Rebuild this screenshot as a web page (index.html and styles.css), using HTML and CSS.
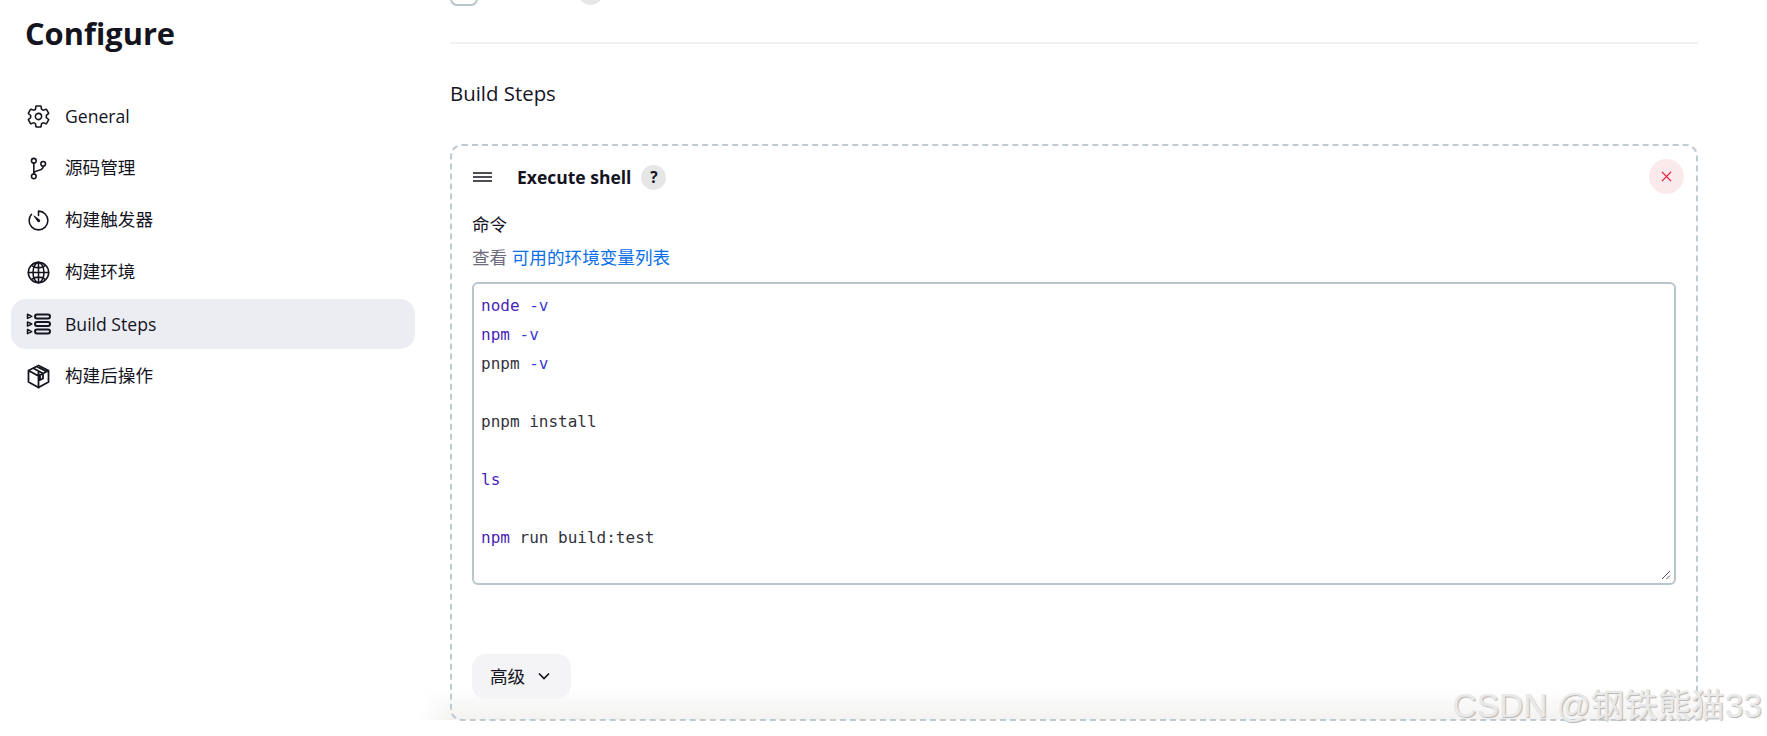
FILE: index.html
```html
<!DOCTYPE html>
<html lang="zh">
<head>
<meta charset="utf-8">
<title>Configure</title>
<link rel="stylesheet" href="styles.css">
</head>
<body>
<div class="fade"></div>
<div class="app">
  <aside class="sidebar">
    <h1 class="title">Configure</h1>
    <nav class="nav">
      <a class="nav-item"><svg class="nav-icon" viewBox="0 0 512 512"><path class="st" d="M262.29 192.31a64 64 0 1057.4 57.4 64.13 64.13 0 00-57.4-57.4zM416.39 256a154.34 154.34 0 01-1.53 20.79l45.21 35.46a10.81 10.81 0 012.45 13.75l-42.77 74a10.81 10.81 0 01-13.14 4.59l-44.9-18.08a16.11 16.11 0 00-15.17 1.75A164.48 164.48 0 01325 400.8a15.94 15.94 0 00-8.82 12.14l-6.73 47.89a11.08 11.08 0 01-10.68 9.17h-85.54a11.11 11.11 0 01-10.69-8.87l-6.72-47.82a16.07 16.07 0 00-9-12.22 155.3 155.3 0 01-21.46-12.57 16 16 0 00-15.11-1.71l-44.89 18.07a10.81 10.81 0 01-13.14-4.58l-42.77-74a10.8 10.8 0 012.45-13.75l38.21-30a16.05 16.05 0 006-14.08c-.36-4.17-.58-8.33-.58-12.5s.21-8.27.58-12.35a16 16 0 00-6.07-13.94l-38.19-30A10.81 10.81 0 0149.48 186l42.77-74a10.81 10.81 0 0113.14-4.59l44.9 18.08a16.11 16.11 0 0015.17-1.75A164.48 164.48 0 01187 111.2a15.94 15.94 0 008.82-12.14l6.73-47.89A11.08 11.08 0 01213.23 42h85.54a11.11 11.11 0 0110.69 8.87l6.72 47.82a16.07 16.07 0 009 12.22 155.3 155.3 0 0121.46 12.57 16 16 0 0015.11 1.71l44.89-18.07a10.81 10.81 0 0113.14 4.58l42.77 74a10.8 10.8 0 01-2.45 13.75l-38.21 30a16.05 16.05 0 00-6.05 14.08c.33 4.14.55 8.3.55 12.47z"/></svg><span>General</span></a>
      <a class="nav-item cjk"><svg class="nav-icon" viewBox="0 0 512 512"><circle class="st" cx="160" cy="96" r="48"/><circle class="st" cx="160" cy="416" r="48"/><path class="st" d="M160 368V144"/><circle class="st" cx="352" cy="160" r="48"/><path class="st" d="M352 208c0 128-192 48-192 160"/></svg><span>源码管理</span></a>
      <a class="nav-item cjk"><svg class="nav-icon" viewBox="0 0 512 512"><path class="st" d="M112.91 128A191.85 191.85 0 0064 254c-1.18 106.35 85.65 193.8 192 194 106.2.2 192-85.83 192-192 0-104.54-83.55-189.61-187.5-192a4.36 4.36 0 00-4.5 4.37V152"/><path class="fl" d="M233.38 278.63l-79-113a8.13 8.13 0 0111.32-11.32l113 79a32.5 32.5 0 01-37.25 53.26 33.21 33.21 0 01-8.07-7.94z"/></svg><span>构建触发器</span></a>
      <a class="nav-item cjk"><svg class="nav-icon" viewBox="0 0 512 512"><path class="st" d="M256 48C141.13 48 48 141.13 48 256s93.13 208 208 208 208-93.13 208-208S370.87 48 256 48z"/><path class="st" d="M256 48c-58.07 0-112.67 93.13-112.67 208S197.93 464 256 464s112.67-93.13 112.67-208S314.07 48 256 48z"/><path class="st" d="M256 48v416M464 256H48M117.33 117.33c38.24 27.15 86.38 43.34 138.67 43.34s100.43-16.19 138.67-43.34M394.67 394.67c-38.24-27.15-86.38-43.34-138.67-43.34s-100.43 16.19-138.67 43.34"/></svg><span>构建环境</span></a>
      <a class="nav-item active"><svg class="nav-icon" viewBox="0 0 25 25"><path class="tri" d="M1.5 2.2l4.2 2.1-4.2 2.100zM1.5 9.900l4.2 2.100-4.200 2.100zM1.500 17.500l4.200 2.100-4.200 2.100z"/><rect class="bar" x="9" y="2.500" width="15" height="4" rx="2"/><rect class="bar" x="9" y="10" width="15" height="4" rx="2"/><rect class="bar" x="9" y="17.500" width="15" height="4" rx="2"/></svg><span>Build Steps</span></a>
      <a class="nav-item cjk"><svg class="nav-icon" viewBox="0 0 25 25"><path class="line" d="M12.5 1.5l10 5v11.500l-10 5.500-10-5.500V6.500zM2.500 6.500l10 5.500 10-5.500M12.500 12v12.500M7 4l10 5.500v5l-3 1.500v-5M10.500 2.500l10 5M9.500 5.500l3 1.500v8"/></svg><span>构建后操作</span></a>
    </nav>
  </aside>

  <main class="main">
    <div class="clipped-row"><span class="checkbox"></span><span class="clipped-help"></span></div>
    <hr class="divider">
    <h2 class="section-title">Build Steps</h2>
    <section class="card">
      <header class="card-head">
        <svg class="drag" viewBox="0 0 19 10"><path d="M0 1h19M0 5h19M0 9h19"/></svg>
        <strong class="card-title">Execute shell</strong>
        <span class="help">?</span>
      </header>
      <button class="close" type="button"><svg viewBox="0 0 12 12"><path d="M1 1l10 10M11 1L1 11"/></svg></button>
      <div class="label">命令</div>
      <div class="hint">查看 <a class="link">可用的环境变量列表</a></div>
      <div class="editor">
<pre class="code"><span class="cmd">node</span> <span class="opt">-v</span>
<span class="cmd">npm</span> <span class="opt">-v</span>
pnpm <span class="opt">-v</span>

pnpm install

<span class="cmd">ls</span>

<span class="cmd">npm</span> run build:test</pre>
        <svg class="grip" viewBox="0 0 10 10"><path d="M1 9l8-8M5.500 9l3.500-3.500"/></svg>
      </div>
      <button class="advanced" type="button">高级<svg viewBox="0 0 12 8"><path d="M1 1.500l5 5 5-5"/></svg></button>
    </section>
  </main>
</div>
<div class="watermark">CSDN @钢铁熊猫33</div>
</body>
</html>
```
FILE: styles.css
```css
* { box-sizing: border-box; }
html, body { margin: 0; height: 736px; overflow: hidden; background: #fff; }
body {
  font-family: "Open Sans", "Noto Sans CJK SC", sans-serif;
  font-size: 17.6px;
  color: #14141f;
  position: relative;
}
.app { position: relative; z-index: 1; display: flex; align-items: flex-start; height: 736px; overflow: hidden; }
.sidebar { width: 451px; flex: none; padding: 0 36px 0 11px; }
.title {
  margin: 0 0 34px 14px;
  padding-top: 9px;
  font-size: 30.8px;
  line-height: 48px;
  font-weight: 700;
}
.nav { display: flex; flex-direction: column; gap: 2px; }
.nav-item {
  display: flex;
  align-items: center;
  gap: 14px;
  height: 50px;
  padding-left: 15px;
  border-radius: 15px;
  font-size: 17.6px;
  line-height: 24px;
}
.nav-item.cjk span { position: relative; top: -1px; }
.nav-item.active { background: #ecedf2; }
.nav-icon { width: 25px; height: 25px; flex: none; }
.st { fill: none; stroke: #14141f; stroke-width: 32; stroke-linecap: round; stroke-linejoin: round; }
.fl { fill: #14141f; }
.tri { fill: none; stroke: #14141f; stroke-width: 1.500; stroke-linejoin: round; }
.bar { fill: none; stroke: #14141f; stroke-width: 2; }
.line { fill: none; stroke: #14141f; stroke-width: 1.800; stroke-linejoin: round; }

.main { width: 1248px; margin-left: -1px; flex: none; }
.clipped-row { display: flex; align-items: center; gap: 100px; height: 28px; margin-top: -22px; }
.checkbox { width: 28px; height: 28px; border: 2px solid #b9c5cb; border-radius: 7px; }
.clipped-help { width: 25px; height: 25px; border-radius: 50%; background: #e6e6e6; }
.divider { height: 2px; margin: 36px 0 0; border: 0; background: #f1f1f4; }
.section-title { margin: 35px 0 0; font-size: 20.4px; line-height: 28px; font-weight: 400; }
.card {
  position: relative;
  height: 577px;
  margin-top: 37px;
  padding: 18px 20px 0;
  border: 2px dashed #c0cbd1;
  border-radius: 12px;
}
.card-head { display: flex; align-items: center; height: 26px; }
.drag { width: 19px; height: 10px; margin: 0 25px 0 1px; }
.drag path { fill: none; stroke: #14141f; stroke-width: 1.600; }
.card-title { font-size: 17.5px; font-weight: 700; }
.help {
  width: 25px; height: 25px; margin-left: 10px;
  display: flex; align-items: center; justify-content: center;
  border-radius: 50%; background: #e6e6e6;
  font-size: 15.5px; font-weight: 700;
}
.close {
  position: absolute; top: 13px; right: 12px;
  width: 35px; height: 35px; padding: 0;
  display: flex; align-items: center; justify-content: center;
  border: 0; border-radius: 50%; background: #fbeaec;
}
.close svg { width: 11px; height: 11px; }
.close path { fill: none; stroke: #e6183c; stroke-width: 1.400; }
.label { margin-top: 22px; line-height: 24px; }
.hint { margin-top: 9px; line-height: 24px; color: #6d6b7c; }
.link { color: #0b6fe8; }
.editor {
  position: relative;
  height: 303px;
  margin-top: 13px;
  padding: 7px;
  border: 2px solid #b9c5cb;
  border-radius: 6px;
}
.code {
  margin: 0;
  font-family: "DejaVu Sans Mono", "Liberation Mono", monospace;
  font-size: 16px;
  line-height: 29px;
  color: #33333c;
}
.cmd { color: #4a1fb8; }
.opt { color: #3a3ad6; }
.grip { position: absolute; right: 3px; bottom: 3px; width: 10px; height: 10px; }
.grip path { fill: none; stroke: #555; stroke-width: 1; }
.advanced {
  position: absolute; left: 20px; top: 508px;
  display: flex; align-items: center; gap: 13px;
  height: 45px; padding: 0 21px 2px 18px;
  border: 0; border-radius: 14px;
  background: #f4f4f6;
  font: inherit; color: #14141f;
}
.advanced svg { width: 12px; height: 8px; }
.advanced path { fill: none; stroke: #14141f; stroke-width: 1.700; }

.fade {
  position: absolute; left: 420px; right: 40px; top: 688px; height: 32px;
  background: linear-gradient(to bottom, rgba(243,242,241,0), rgba(243,242,241,1));
  pointer-events: none;
  -webkit-mask-image: linear-gradient(to right, transparent, #000 30px, #000 calc(100% - 30px), transparent);
}
.watermark {
  position: absolute; z-index: 2; right: 5px; top: 684px;
  font-family: "Liberation Sans", "Noto Sans CJK SC", sans-serif;
  font-size: 33.5px;
  line-height: 44px;
  white-space: nowrap;
  color: #e9e9e9;
  text-shadow: 1px 1px 1px #b4b4b4;
}
```
